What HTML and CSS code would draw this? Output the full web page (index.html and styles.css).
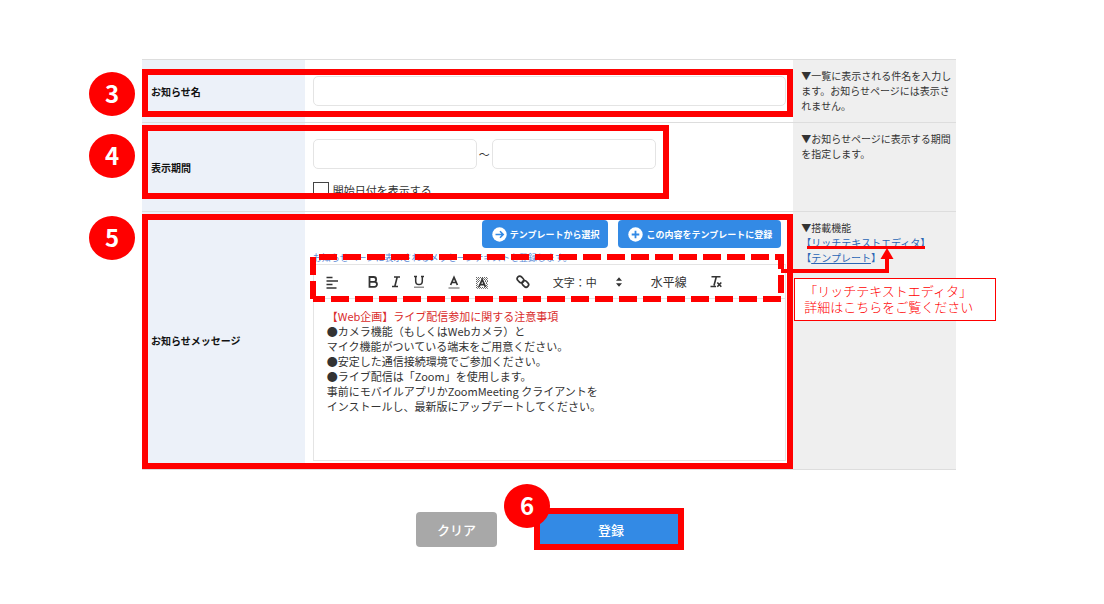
FILE: index.html
```html
<!DOCTYPE html>
<html lang="ja">
<head>
  <meta charset="UTF-8">
  <meta name="viewport" content="width=device-width, initial-scale=1.0">
  <title>お知らせ登録</title>
  <link rel="stylesheet" href="styles.css">
</head>
<body>
  <form class="notice-form">
    <div class="form-row">
      <label class="row-label" for="notice-name">お知らせ名</label>
      <div class="row-main row-name">
        <input type="text" id="notice-name" class="text-input" />
      </div>
      <div class="row-note">▼一覧に表示される件名を入力します。お知らせページには表示されません。</div>
      <span class="frame frame-name"></span>
      <span class="step step-name">3</span>
    </div>

    <div class="form-row">
      <label class="row-label" for="start-date">表示期間</label>
      <div class="row-main row-period">
        <div class="period">
          <input type="text" id="start-date" class="text-input date-input" />
          <span class="tilde">～</span>
          <input type="text" id="end-date" class="text-input date-input" aria-label="終了日" />
        </div>
        <label class="check"><input type="checkbox" />開始日付を表示する</label>
      </div>
      <div class="row-note">▼お知らせページに表示する期間を指定します。</div>
      <span class="frame frame-period"></span>
      <span class="step step-period">4</span>
    </div>

    <div class="form-row">
      <div class="row-label" id="message-label">お知らせメッセージ</div>
      <div class="row-main row-message">
        <div class="template-buttons">
          <button type="button" class="template-button">
            <svg width="15" height="15" viewBox="0 0 15 15"><circle cx="7.5" cy="7.5" r="7.2" fill="#fff"/><path d="M3.5 7.5h7.5M8 4.3l3.2 3.2L8 10.7" fill="none" stroke="#338ae5" stroke-width="1.6"/></svg>
            テンプレートから選択
          </button>
          <button type="button" class="template-button">
            <svg width="15" height="15" viewBox="0 0 15 15"><circle cx="7.5" cy="7.5" r="7.2" fill="#fff"/><path d="M7.5 3.7v7.6M3.7 7.5h7.6" fill="none" stroke="#338ae5" stroke-width="1.8"/></svg>
            この内容をテンプレートに登録
          </button>
        </div>
        <p class="help">お知らせページに表示されるメッセージテキストを登録します。</p>
        <div class="editor">
          <div class="toolbar">
            <div class="tools">
              <button type="button" aria-label="配置"><svg width="14" height="14" viewBox="0 0 14 14"><path d="M1.5 2.5h6M1.5 6h11.500M1.500 9.500h6M1.500 13h10" stroke="#333" stroke-width="1.4"/></svg></button>
            </div>
            <div class="tools">
              <button type="button" aria-label="太字"><svg width="14" height="14" viewBox="0 0 14 14"><path d="M3.5 2h4.2a2.3 2.3 0 0 1 0 4.8H3.5zM3.5 6.8h5a2.5 2.5 0 0 1 0 5h-5z" fill="none" stroke="#333" stroke-width="1.8"/></svg></button>
              <button type="button" aria-label="斜体"><svg width="14" height="14" viewBox="0 0 14 14"><path d="M5 2h6M3 11.5h6M8.2 2L5.8 11.5" fill="none" stroke="#333" stroke-width="1.6"/></svg></button>
              <button type="button" aria-label="下線"><svg width="14" height="14" viewBox="0 0 14 14"><path d="M2 1.5h3M9 1.5h3M3.7 1.5v4.8a3.3 3.3 0 0 0 6.6 0V1.5" fill="none" stroke="#333" stroke-width="1.5"/><path d="M2 12.2h10" stroke="#777" stroke-width="1.2"/></svg></button>
            </div>
            <div class="tools tools-color">
              <button type="button" aria-label="文字色"><svg width="14" height="14" viewBox="0 0 14 14"><path d="M3.6 10L7 2.3l3.4 7.7M4.8 7.5h4.4" fill="none" stroke="#333" stroke-width="1.7"/><path d="M1.5 13h11" stroke="#888" stroke-width="1.4"/></svg></button>
              <button type="button" aria-label="背景色"><svg width="14" height="14" viewBox="0 0 14 14"><path d="M1 2.500h12M1 4.500h4M9 4.500h4M1 6.500h3M10 6.500h3M1 8.500h2M11 8.500h2M1 10.500h2M11 10.500h2M1 12.500h12" stroke="#666" stroke-dasharray="1 1"/><path d="M2 3.500h11M2 5.500h3M10 5.500h3M2 7.500h2M11 7.500h2M2 9.500h1M12 9.500h1M2 11.500h1M12 11.500h1M2 13.500h11" stroke="#888" stroke-dasharray="1 1"/><path d="M3.900 12L7.200 4.500l3.300 7.500M5 9.700h4.400" fill="none" stroke="#333" stroke-width="1.800"/></svg></button>
            </div>
            <div class="tools">
              <button type="button" aria-label="リンク"><svg width="14" height="14" viewBox="0 0 14 14"><g fill="none" stroke="#333" stroke-width="1.7"><rect x="0.900" y="2" width="7.200" height="5" rx="2.500" transform="rotate(45 4.500 4.500)"/><rect x="5.700" y="6.300" width="7.200" height="5" rx="2.500" transform="rotate(45 9.300 8.800)"/></g></svg></button>
            </div>
            <div class="size">
              <select aria-label="文字サイズ"><option>文字：中</option></select>
              <svg width="8" height="12" viewBox="0 0 8 12"><path d="M1 4.800L4 1.300l3 3.500zM1 7.200l3 3.500 3-3.500z" fill="#333"/></svg>
            </div>
            <button type="button" class="line-button">水平線</button>
            <div class="tools">
              <button type="button" aria-label="書式をクリア"><svg width="14" height="14" viewBox="0 0 14 14"><path d="M2.500 1.700h9M7.300 1.700L5 10.500M1.500 11.500h5.500M8.300 7.500l4 4.300M12.300 7.500l-4 4.300" fill="none" stroke="#333" stroke-width="1.600"/></svg></button>
            </div>
          </div>
          <div class="editor-body" contenteditable="true" role="textbox" aria-multiline="true" aria-labelledby="message-label" spellcheck="false">
            <p class="editor-title">【Web企画】ライブ配信参加に関する注意事項</p>
            <p>●カメラ機能（もしくはWebカメラ）と</p>
            <p>マイク機能がついている端末をご用意ください。</p>
            <p>●安定した通信接続環境でご参加ください。</p>
            <p>●ライブ配信は「Zoom」を使用します。</p>
            <p>事前にモバイルアプリかZoomMeeting クライアントを</p>
            <p>インストールし、最新版にアップデートしてください。</p>
          </div>
          <svg class="toolbar-frame" width="474" height="48" viewBox="0 0 474 48">
            <g fill="none" stroke="#f00" stroke-width="6" stroke-dasharray="18 6">
              <path d="M3 3H471V45H3" stroke-dashoffset="18"/>
              <path d="M3 45V0"/>
            </g>
          </svg>
        </div>
      </div>
      <div class="row-note">
        ▼搭載機能<br>
        <a href="#">【<span>リッチテキストエディタ</span>】</a><br>
        <a href="#">【<span>テンプレート</span>】</a>
        <svg class="arrow" width="146" height="28" viewBox="0 0 146 28">
          <path d="M26 1.500H144" stroke="#f00" stroke-width="3"/>
          <path d="M0 25H106V11" fill="none" stroke="#f00" stroke-width="4"/>
          <path d="M99.500 13L106 2l6.500 11z" fill="#f00"/>
        </svg>
        <p class="callout">「リッチテキストエディタ」<br>詳細はこちらをご覧ください</p>
      </div>
      <span class="frame frame-message"></span>
      <span class="step step-message">5</span>
    </div>

    <div class="actions">
      <button type="reset" class="action clear">クリア</button>
      <div class="submit-wrap">
        <button type="submit" class="action submit">登録</button>
        <span class="step step-submit">6</span>
      </div>
    </div>
  </form>
</body>
</html>
```

FILE: styles.css
```css
* {
  box-sizing: border-box;
}

body {
  margin: 0;
  background-color: #fff;
  color: #333;
  font-family: "Noto Sans CJK JP", sans-serif;
  font-size: 10px;
  line-height: 15px;
}

p {
  margin: 0;
}

button,
input,
select {
  font-family: inherit;
  color: inherit;
}

button {
  padding: 0;
  border: 0;
  background: none;
  cursor: pointer;
}

.notice-form {
  padding: 59px 148px 50px 142px;
}

.form-row {
  position: relative;
  display: grid;
  grid-template-columns: 1fr 3fr 1fr;
  border-top: 1px solid #ddd;
}

.row-label {
  display: flex;
  align-items: center;
  padding-left: 9px;
  background-color: #ecf1f9;
  color: #111;
  font-weight: bold;
}

.row-main {
  min-width: 0;
  padding: 8px 7px 8px 8px;
}

.row-name {
  display: flex;
  align-items: center;
}

.row-period {
  padding-top: 16px;
  padding-bottom: 13px;
}

.row-note {
  position: relative;
  min-width: 0;
  padding: 8px 2px 9px 8px;
  background-color: #efefef;
}

.row-note a {
  color: #2a65b5;
  text-decoration: none;
}

.row-note a span {
  text-decoration: underline;
}

.text-input {
  width: 100%;
  height: 30px;
  padding: 0 8px;
  border: 1px solid #e4e4e4;
  border-radius: 5px;
  background-color: #fff;
}

.period {
  display: flex;
  align-items: center;
  gap: 2px;
}

.date-input {
  width: 164px;
}

.tilde {
  font-size: 11px;
}

.check {
  display: flex;
  align-items: center;
  gap: 4px;
  height: 16px;
  margin-top: 13px;
  font-size: 11px;
}

.check input {
  appearance: none;
  width: 16px;
  height: 16px;
  margin: 0;
  border: 1px solid #444;
  background-color: #fff;
}

.template-buttons {
  display: flex;
  justify-content: flex-end;
  gap: 10px;
  padding-right: 5px;
}

.template-button {
  display: flex;
  align-items: center;
  gap: 3px;
  height: 28px;
  padding: 0 9px 0 10px;
  border-radius: 4px;
  background-color: #338ae5;
  color: #fff;
  font-size: 9px;
  font-weight: bold;
}

.help {
  margin: 5px 0 1px;
  color: #5c8ad6;
  font-size: 9px;
  line-height: 10px;
}

/* editor */
.editor {
  position: relative;
  border: 1px solid #e4e4e4;
}

.toolbar {
  display: flex;
  align-items: center;
  height: 34px;
  padding-left: 7px;
  border-bottom: 1px solid #e4e4e4;
}

.tools {
  display: flex;
  margin-right: 18px;
}

.tools button {
  display: flex;
  align-items: center;
  justify-content: center;
  width: 23px;
  height: 24px;
}

.tools-color {
  gap: 5px;
  margin-left: -6px;
}

.size {
  display: flex;
  align-items: center;
  gap: 16px;
  margin-right: 28px;
}

.size select {
  appearance: none;
  width: 46px;
  padding: 0;
  border: 0;
  background: none;
  font-size: 11px;
}

.line-button {
  margin-right: 18px;
  font-size: 12px;
}

.editor-body {
  min-height: 161px;
  padding: 9px 13px;
  font-size: 11px;
  outline: none;
}

.editor-title {
  color: #d92b2b;
  line-height: 16px;
}

/* buttons under the form */
.actions {
  display: flex;
  justify-content: center;
  align-items: center;
  gap: 37px;
  padding: 38px 0 0 2px;
  border-top: 1px solid #ddd;
}

.action {
  font-size: 13px;
  font-weight: 500;
  color: #fff;
}

.clear {
  width: 81px;
  height: 35px;
  border-radius: 4px;
  background-color: #a8a8a8;
}

.submit-wrap {
  position: relative;
}

.submit {
  display: block;
  width: 150px;
  height: 42px;
  padding-left: 4px;
  border: 6px solid #f00;
  background-color: #338ae5;
}

/* red guide marks */
.frame {
  position: absolute;
  left: 0;
  border: 6px solid #f00;
  pointer-events: none;
}

.frame-name {
  top: 9px;
  right: 20%;
  bottom: 5px;
}

.frame-period {
  top: 2px;
  bottom: 12px;
  width: 527px;
}

.frame-message {
  top: 2px;
  right: 20%;
  bottom: 0;
}

.step {
  position: absolute;
  left: -53px;
  width: 46px;
  height: 44px;
  border-radius: 50%;
  background-color: #f00;
  color: #fff;
  font-size: 24px;
  font-weight: bold;
  line-height: 42px;
  text-align: center;
}

.step-name {
  top: 12px;
}

.step-period {
  top: 11px;
}

.step-message {
  top: 4px;
}

.step-submit {
  top: -24px;
  left: -30px;
}

.toolbar-frame {
  position: absolute;
  top: -11px;
  left: -4px;
  pointer-events: none;
}

.arrow {
  position: absolute;
  top: 34px;
  left: -12px;
  z-index: 1;
  pointer-events: none;
}

.callout {
  position: absolute;
  top: 66px;
  left: 1px;
  z-index: 1;
  width: 202px;
  padding: 4px 9px 5px;
  border: 1px solid #f00;
  background-color: #fff;
  color: #f00;
  font-size: 13px;
  font-weight: 300;
  line-height: 16px;
  white-space: nowrap;
}
```
